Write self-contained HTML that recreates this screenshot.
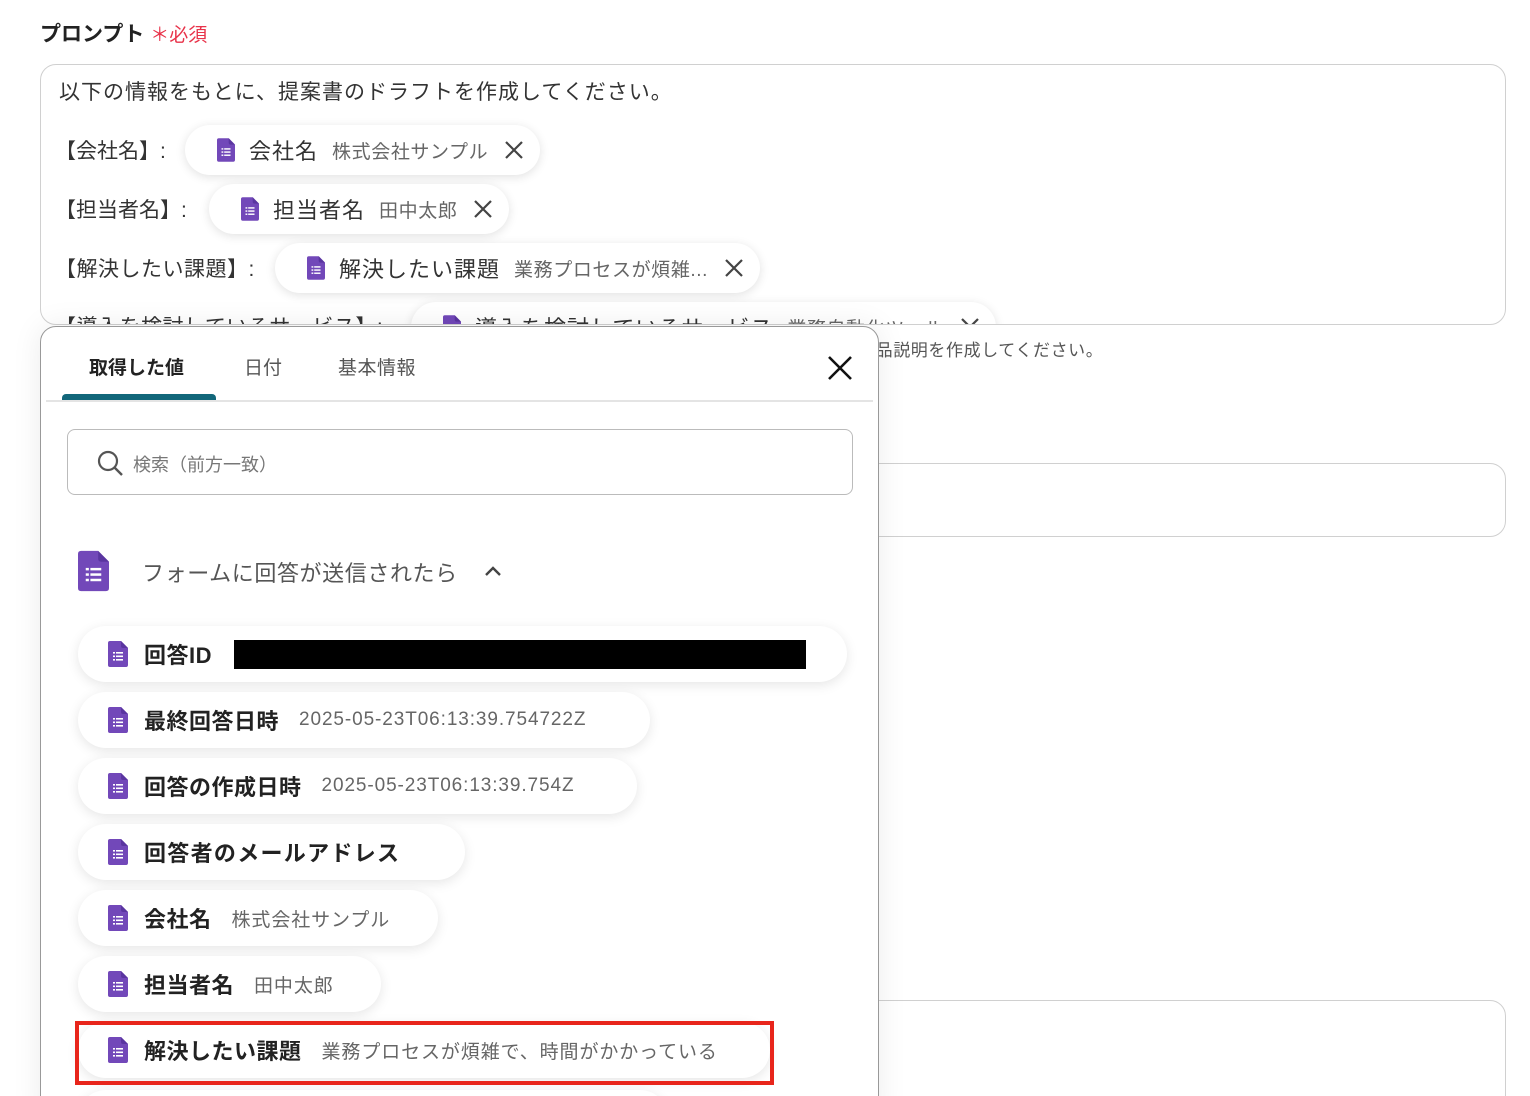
<!DOCTYPE html><html><head><meta charset="utf-8"><style>
*{box-sizing:border-box;margin:0;padding:0}
html,body{width:1530px;height:1096px;overflow:hidden}
body{background:#fff;font-family:"Liberation Sans","Noto Sans CJK JP",sans-serif;color:#333;position:relative}
.abs{position:absolute}
.chip{position:absolute;height:50px;border-radius:25px;background:#fff;box-shadow:0 2px 10px rgba(0,0,0,.12);display:flex;align-items:center;padding-left:32px;white-space:nowrap}
.chip .n{font-size:22px;color:#333;margin-left:14px;letter-spacing:1px}
.chip .v{font-size:19px;color:#666;margin-left:14px;letter-spacing:.6px}
.chip svg.x{margin-left:16px;margin-right:16px}
.pill{position:absolute;left:78px;height:56px;border-radius:28px;background:#fff;box-shadow:0 3px 12px rgba(0,0,0,.1);display:flex;align-items:center;padding-left:30px;white-space:nowrap}
.pill .n{font-size:22px;font-weight:bold;color:#222;margin-left:16px;letter-spacing:.5px}
.pill .v{font-size:19px;color:#666;margin-left:20px;letter-spacing:.9px}
</style></head><body>
<svg width="0" height="0" style="position:absolute"><defs><symbol id="doc" viewBox="0 0 20 26"><path d="M2 0H13L20 7V24Q20 26 18 26H2Q0 26 0 24V2Q0 0 2 0Z" fill="#7248b9"/><path d="M13 0L20 7H15Q13 7 13 5Z" fill="#5a35a0"/><g fill="#fff"><rect x="5" y="11" width="2" height="1.6"/><rect x="8" y="11" width="7" height="1.6"/><rect x="5" y="14.5" width="2" height="1.6"/><rect x="8" y="14.5" width="7" height="1.6"/><rect x="5" y="18" width="2" height="1.6"/><rect x="8" y="18" width="7" height="1.6"/></g></symbol>
<symbol id="x" viewBox="0 0 20 20"><path d="M2 2L18 18M18 2L2 18" stroke="#444" stroke-width="2.2"/></symbol></defs></svg>

<div class="abs" style="left:40px;top:18px;font-size:21px;font-weight:bold;color:#222">プロンプト <span style="color:#e8334a;font-weight:normal;font-size:19px">＊必須</span></div>

<div class="abs" style="left:40px;top:64px;width:1466px;height:261px;border:1.5px solid #d0d0d0;border-radius:16px;overflow:hidden">
 <div class="abs" style="left:18px;top:11px;font-size:21px;color:#333;letter-spacing:1px">以下の情報をもとに、提案書のドラフトを作成してください。</div>
 <div class="abs" style="left:14px;top:70px;font-size:21px">【会社名】:</div>
 <div class="chip" style="left:144px;top:60px"><svg width="18" height="24"><use href="#doc"/></svg><span class="n">会社名</span><span class="v">株式会社サンプル</span><svg class="x" width="20" height="20"><use href="#x"/></svg></div>
 <div class="abs" style="left:14px;top:129px;font-size:21px">【担当者名】:</div>
 <div class="chip" style="left:168px;top:119px"><svg width="18" height="24"><use href="#doc"/></svg><span class="n">担当者名</span><span class="v">田中太郎</span><svg class="x" width="20" height="20"><use href="#x"/></svg></div>
 <div class="abs" style="left:14px;top:188px;font-size:21px;letter-spacing:.5px">【解決したい課題】:</div>
 <div class="chip" style="left:234px;top:178px"><svg width="18" height="24"><use href="#doc"/></svg><span class="n">解決したい課題</span><span class="v">業務プロセスが煩雑...</span><svg class="x" width="20" height="20"><use href="#x"/></svg></div>
 <div class="abs" style="left:14px;top:246px;font-size:21px;letter-spacing:.5px">【導入を検討しているサービス】:</div>
 <div class="chip" style="left:370px;top:237px"><svg width="18" height="24"><use href="#doc"/></svg><span class="n">導入を検討しているサービス</span><span class="v">業務自動化ツール</span><svg class="x" width="20" height="20"><use href="#x"/></svg></div>
</div>
<div class="abs" style="left:858px;top:336px;font-size:17px;color:#555;letter-spacing:.6px">商品説明を作成してください。</div>
<div class="abs" style="left:600px;top:463px;width:906px;height:74px;border:1.5px solid #d0d0d0;border-radius:16px"></div>
<div class="abs" style="left:600px;top:1000px;width:906px;height:120px;border:1.5px solid #d0d0d0;border-radius:16px"></div>

<div class="abs" style="left:40px;top:326px;width:839px;height:800px;background:#fff;border:1.5px solid #999;border-radius:16px;box-shadow:0 0 30px rgba(0,0,0,.08)">
 <div class="abs" style="left:48px;top:26px;font-size:19px;font-weight:bold;color:#222">取得した値</div>
 <div class="abs" style="left:203px;top:26px;font-size:19px;color:#555">日付</div>
 <div class="abs" style="left:297px;top:26px;font-size:19px;color:#555;letter-spacing:.5px">基本情報</div>
 <div class="abs" style="left:21px;top:67px;width:154px;height:6px;background:#12677a;border-radius:4px 4px 0 0"></div>
 <div class="abs" style="left:5px;top:73px;width:827px;height:2px;background:#e4e4e4"></div>
 <svg class="abs" style="left:786px;top:28px" width="26" height="26"><path d="M2 2L24 24M24 2L2 24" stroke="#111" stroke-width="2.6"/></svg>
 <div class="abs" style="left:26px;top:102px;width:786px;height:66px;border:1.5px solid #bbb;border-radius:8px"></div>
 <svg class="abs" style="left:55px;top:122px" width="30" height="30"><circle cx="12" cy="12" r="9" fill="none" stroke="#555" stroke-width="2.2"/><path d="M18.5 18.5L26 26" stroke="#555" stroke-width="2.4"/></svg>
 <div class="abs" style="left:92px;top:124px;font-size:18px;color:#777">検索（前方一致）</div>
 <svg class="abs" style="left:37px;top:223px" width="31" height="42"><use href="#doc"/></svg>
 <div class="abs" style="left:101px;top:229px;font-size:22px;color:#555;letter-spacing:.6px">フォームに回答が送信されたら</div>
 <svg class="abs" style="left:443px;top:238px" width="18" height="12"><path d="M2 10L9 3L16 10" fill="none" stroke="#444" stroke-width="2.4"/></svg>
</div>

<div class="pill" style="top:626px;width:769px"><svg width="20" height="26"><use href="#doc"/></svg><span class="n">回答ID</span><span style="display:inline-block;margin-left:22px;width:572px;height:29px;background:#000"></span></div>
<div class="pill" style="top:692px;width:572px"><svg width="20" height="26"><use href="#doc"/></svg><span class="n">最終回答日時</span><span class="v">2025-05-23T06:13:39.754722Z</span></div>
<div class="pill" style="top:758px;width:559px"><svg width="20" height="26"><use href="#doc"/></svg><span class="n">回答の作成日時</span><span class="v">2025-05-23T06:13:39.754Z</span></div>
<div class="pill" style="top:824px;width:387px"><svg width="20" height="26"><use href="#doc"/></svg><span class="n" style="letter-spacing:1.3px">回答者のメールアドレス</span></div>
<div class="pill" style="top:890px;width:360px"><svg width="20" height="26"><use href="#doc"/></svg><span class="n">会社名</span><span class="v">株式会社サンプル</span></div>
<div class="pill" style="top:956px;width:303px"><svg width="20" height="26"><use href="#doc"/></svg><span class="n">担当者名</span><span class="v">田中太郎</span></div>
<div class="pill" style="top:1022px;width:692px"><svg width="20" height="26"><use href="#doc"/></svg><span class="n">解決したい課題</span><span class="v">業務プロセスが煩雑で、時間がかかっている</span></div>
<div class="pill" style="top:1090px;width:590px"></div>
<div class="abs" style="left:75px;top:1021px;width:699px;height:64px;border:4px solid #e8251b"></div>
</body></html>
